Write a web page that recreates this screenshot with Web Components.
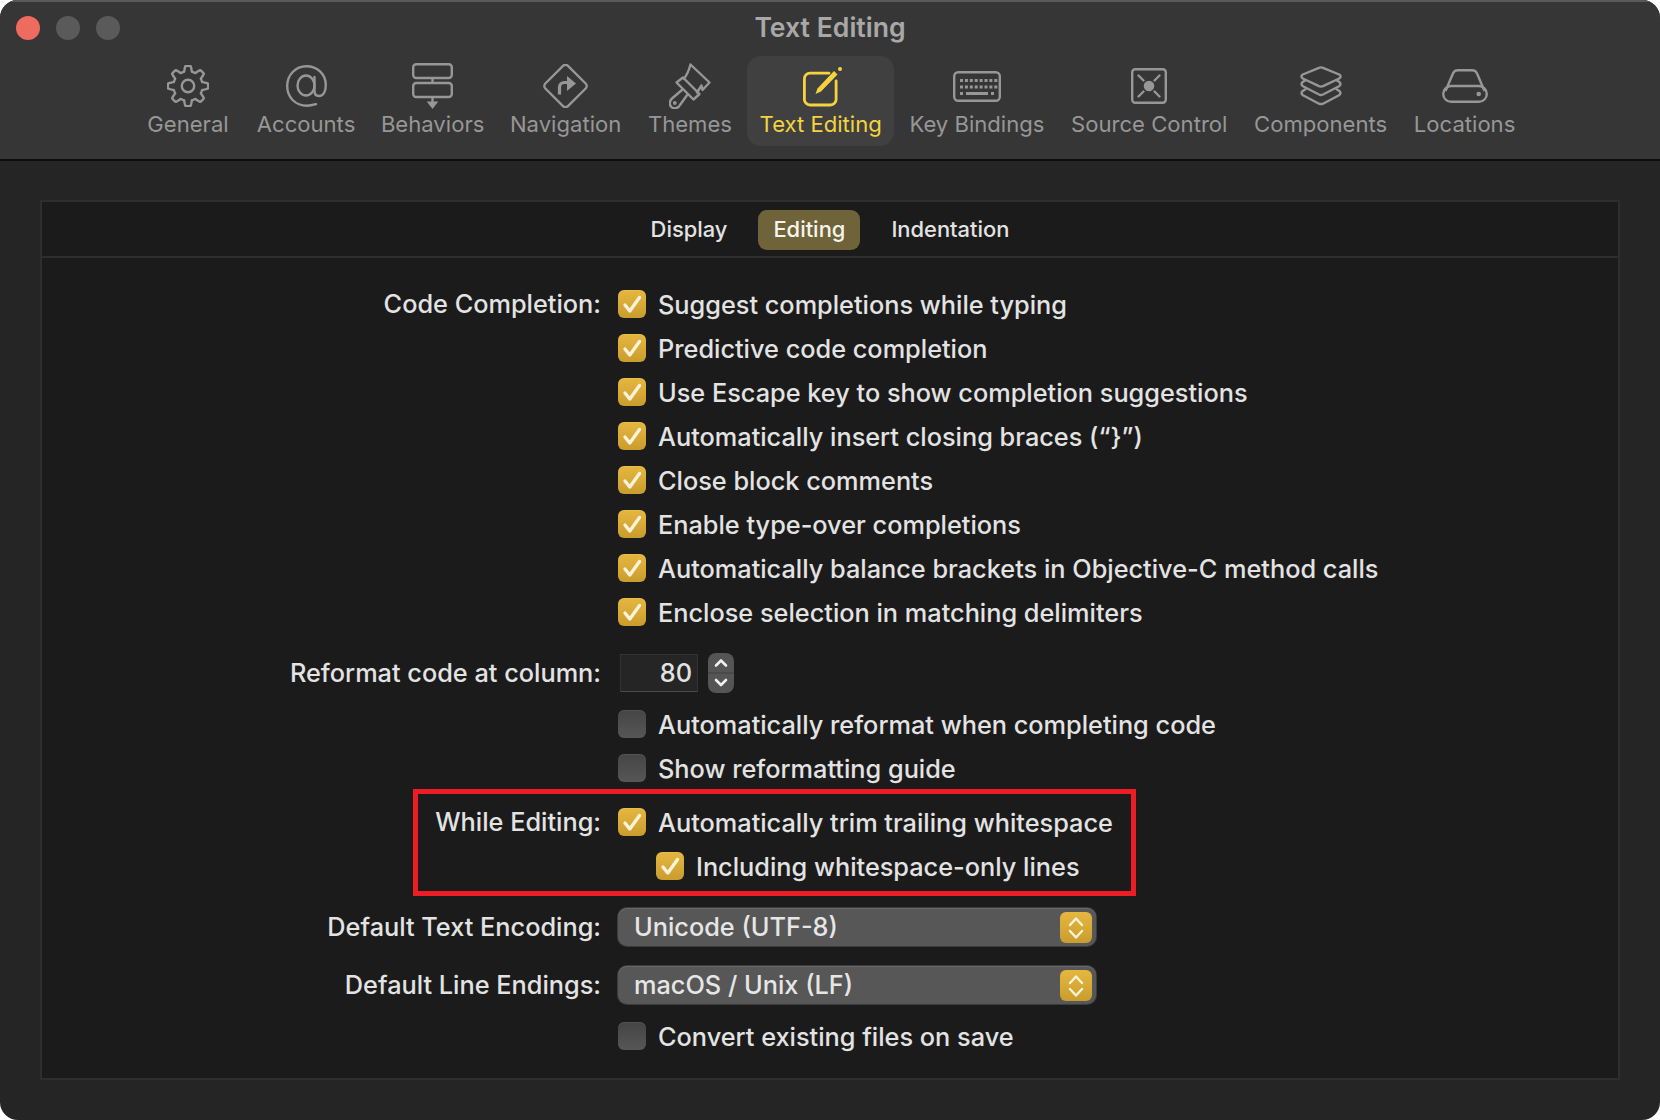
<!DOCTYPE html>
<html>
<head>
<meta charset="utf-8">
<style>
  html, body { margin: 0; background: #fff; }
  body { width: 1660px; height: 1120px; overflow: hidden; font-family: "Inter", "Liberation Sans", sans-serif; }
</style>
</head>
<body>
<prefs-window></prefs-window>
<script>
// gear outline: eight soft teeth around the centre
function gearPath() {
  let d = '';
  for (let i = 0; i < 144; i++) {
    const a = i / 144 * Math.PI * 2 + Math.PI / 8;
    const w = Math.max(-1, Math.min(1, Math.cos(a * 8) * 1.9));
    const r = 17.4 + 2.7 * w;
    d += (i ? 'L' : 'M') + (21 + r * Math.cos(a)).toFixed(2) + ' ' + (21 + r * Math.sin(a)).toFixed(2);
  }
  return d + 'z';
}

function keyDots() {
  let s = '';
  for (const y of [8, 14.500]) {
    for (let c = 0; c < 8; c++) s += `<rect x="${7 + c * 4.9}" y="${y}" width="3" height="3"/>`;
  }
  return s + '<rect x="7" y="21" width="3" height="3"/><rect x="13" y="21" width="22" height="3"/><rect x="38" y="21" width="3" height="3"/>';
}

const ICONS = {
  general: `<svg width="42" height="42" viewBox="0 0 42 42" fill="none" stroke="currentColor" stroke-width="2.400" stroke-linejoin="round"><path d="${gearPath()}"/><circle cx="21" cy="21" r="6.200"/></svg>`,
  accounts: `<svg width="41" height="42" viewBox="0 0 41 42" fill="none" stroke="currentColor" stroke-width="2.400" stroke-linecap="round"><path d="M30 39.200C27 40 24 40.700 21 40.700 9 40.700 1.200 32 1.200 21 1.200 10 9.500 1.300 20.500 1.300 31.500 1.300 39.800 9.500 39.800 20 39.800 27 37 31 33 31 29.800 31 28.500 29 28.500 26V12"/><ellipse cx="20" cy="20.500" rx="8.500" ry="10"/></svg>`,
  behaviors: `<svg width="41" height="46" viewBox="0 0 41 46" fill="none" stroke="currentColor" stroke-width="2.400"><rect x="1.200" y="1.200" width="38.600" height="13.800" rx="3"/><rect x="1.200" y="20" width="38.600" height="14" rx="3"/><path d="M20.500 15v5M20.500 34v5"/><path d="M14.700 38.500h11.600L20.500 46z" fill="currentColor" stroke="none"/></svg>`,
  navigation: `<svg width="45" height="44" viewBox="0 0 45 44" fill="none" stroke="currentColor" stroke-width="2.400" stroke-linejoin="round"><rect x="6.500" y="6" width="32" height="32" rx="3.500" transform="rotate(45 22.500 22)"/><path d="M16.500 30.500v-7c0-3 2-5 5-5h5" stroke-width="3.200"/><path d="M24 12l9 7.500-9 7.500z" fill="currentColor" stroke="none"/></svg>`,
  themes: `<svg width="42" height="46" viewBox="0 0 42 46" fill="none" stroke="currentColor" stroke-width="2.400" stroke-linejoin="round" stroke-linecap="round"><path d="M15 15.500C18 12 20 7 21.500 1.500L40.500 19.500 33.500 27 32.500 22.500 28 29.500"/><path d="M7.500 19.500L14 14.500 30.500 31 24.500 36.500z"/><path d="M13.500 26.500L3 35.500C-.300 38.500 .500 43 3 44.500 6 46 9.500 45 11 42L18.500 31.500"/><circle cx="5.800" cy="40" r="1.900" fill="currentColor" stroke="none"/></svg>`,
  text: `<svg style="margin-left:4px" width="40" height="42" viewBox="0 0 40 42" fill="none" stroke="currentColor"><path d="M26 8.200H7A5.600 5.600 0 0 0 1.400 13.800V34.400A5.600 5.600 0 0 0 7 40H27.500A5.600 5.600 0 0 0 33.100 34.400V16" stroke-width="2.800" stroke-linecap="round"/><path d="M12.500 29L14.500 23.500 31 6 34.500 9.500 18 26.500z" fill="currentColor" stroke="none"/><circle cx="37" cy="4" r="2" fill="currentColor" stroke="none"/></svg>`,
  keys: `<svg width="48" height="31" viewBox="0 0 48 31" fill="none" stroke="currentColor" stroke-width="2.400"><rect x="1.200" y="1.200" width="45.600" height="28.600" rx="4"/><g fill="currentColor" stroke="none">${keyDots()}</g></svg>`,
  source: `<svg width="36" height="36" viewBox="0 0 36 36" fill="none" stroke="currentColor" stroke-width="2.400" stroke-linecap="round"><rect x="1.200" y="1.200" width="33.600" height="33.600" rx="3"/><circle cx="18" cy="18" r="5.300" fill="currentColor" stroke="none"/><path d="M7.500 7.500l5 5M28.500 7.500l-5 5M7.500 28.500l5-5M28.500 28.500l-5-5"/></svg>`,
  components: `<svg width="42" height="40" viewBox="0 0 42 40" fill="none" stroke="currentColor" stroke-width="2.400" stroke-linejoin="round" stroke-linecap="round"><path d="M19 1.800Q21 1 23 1.800L39.200 8.500Q42 10.300 39.200 12.500L23 20.200Q21 21 19 20.200L2.800 12.500Q0 10.300 2.800 8.500z"/><path d="M5.500 14.200L3 15.800Q0 18 3 20.200L19 28.500Q21 29.400 23 28.500L39 20.200Q42 18 39 15.800L36.500 14.200"/><path d="M5.500 23.200L3 24.800Q0 27 3 29.200L19 37.700Q21 38.600 23 37.700L39 29.200Q42 27 39 24.800L36.500 23.200"/></svg>`,
  locations: `<svg width="46" height="34" viewBox="0 0 46 34" fill="none" stroke="currentColor" stroke-width="2.400"><path d="M3.500 22L10.500 5.500C11.500 2.500 13.500 1.200 16 1.200H30C32.500 1.200 34.500 2.500 35.500 5.500L42.500 22"/><rect x="1.200" y="17" width="43.600" height="15.800" rx="7.900"/><circle cx="36.700" cy="25" r="2.300" fill="currentColor" stroke="none"/></svg>`
};

class PrefTool extends HTMLElement {
  constructor() {
    super();
    this.attachShadow({ mode: 'open' });
    const on = this.hasAttribute('active');
    this.shadowRoot.innerHTML = `
      <style>
        :host { display: block; height: 90px; margin-top: 54px; }
        .t { height: 90px; box-sizing: border-box; padding: 5px ${on ? '12.500px' : '13.300px'} 0; margin: 0 ${on ? '0.800px' : '0'}; border-radius: 14px; display: flex; flex-direction: column; align-items: center; color: ${on ? '#f5d33f' : '#979797'}; background: ${on ? '#404040' : 'transparent'}; }
        .i { height: 50px; display: flex; align-items: center; justify-content: center; }
        .l { font-size: 22.100px; line-height: 26px; white-space: nowrap; }
      </style>
      <div class="t"><div class="i">${ICONS[this.getAttribute('icon')]}</div><div class="l"><slot></slot></div></div>`;
  }
}
customElements.define('pref-tool', PrefTool);

class PrefCheck extends HTMLElement {
  constructor() {
    super();
    this.attachShadow({ mode: 'open' });
    const on = this.hasAttribute('checked');
    this.shadowRoot.innerHTML = `
      <style>
        :host { display: flex; align-items: center; gap: 12px; height: 44px; color: #e3e3e3; font-size: 25.300px; font-weight: 450; white-space: nowrap; }
        .b { width: 28px; height: 28px; border-radius: 6px; flex: none; background: ${on ? 'linear-gradient(#e6b73f,#c99c2f)' : 'linear-gradient(#454545,#565656)'}; box-shadow: inset 0 1px 0 rgba(255,255,255,.08); display: block; }
        svg { display: block; }
      </style>
      <span class="b">${on ? '<svg width="28" height="28" viewBox="0 0 28 28" fill="none" stroke="#fbf3d9" stroke-width="3.400" stroke-linecap="round" stroke-linejoin="round"><path d="M7 15l4.800 6L21.500 7.500"/></svg>' : ''}</span><span><slot></slot></span>`;
  }
}
customElements.define('pref-check', PrefCheck);

class PrefPopup extends HTMLElement {
  constructor() {
    super();
    this.attachShadow({ mode: 'open' });
    this.shadowRoot.innerHTML = `
      <style>
        :host { display: flex; align-items: center; width: 478px; height: 38px; margin: 3px 0; box-sizing: border-box; border-radius: 9px; background: #575757; box-shadow: 0 0 0 1px #3c3c3c, inset 0 1px 0 #686868; color: #e6e6e6; font-size: 25.300px; font-weight: 450; padding: 0 4px 0 16px; }
        .s { flex: 1; position: relative; top: -1px; }
        .a { width: 32px; height: 31px; border-radius: 6px; background: linear-gradient(#e6b73f,#c99c2f); display: block; }
        svg { display: block; }
      </style>
      <span class="s"><slot></slot></span>
      <span class="a"><svg width="32" height="31" viewBox="0 0 32 31" fill="none" stroke="#fbf3d9" stroke-width="2.400" stroke-linecap="round" stroke-linejoin="round"><path d="M10 13l6-6.500 6 6.500M10 19l6 6.500 6-6.500"/></svg></span>`;
  }
}
customElements.define('pref-popup', PrefPopup);

class PrefRow extends HTMLElement {
  constructor() {
    super();
    this.attachShadow({ mode: 'open' });
    this.shadowRoot.innerHTML = `
      <style>
        :host { display: grid; grid-template-columns: 559px 1fr; column-gap: 17px; align-items: start; color: #e3e3e3; font-size: 25.300px; font-weight: 450; }
        .k { text-align: right; line-height: 44px; white-space: nowrap; }
        .v { display: flex; flex-direction: column; align-items: flex-start; }
      </style>
      <div class="k">${this.getAttribute('label') || ''}</div>
      <div class="v"><slot></slot></div>`;
  }
}
customElements.define('pref-row', PrefRow);

class PrefStepper extends HTMLElement {
  constructor() {
    super();
    this.attachShadow({ mode: 'open' });
    this.shadowRoot.innerHTML = `
      <style>
        :host { display: flex; align-items: center; gap: 10px; height: 44px; margin-left: 2px; color: #e3e3e3; font-size: 25.300px; font-weight: 450; }
        .f { width: 78px; height: 38px; box-sizing: border-box; background: #252525; border: 1px solid #333; border-bottom-color: #4a4a4a; text-align: right; line-height: 36px; padding-right: 5px; }
        .s { width: 26px; height: 40px; border-radius: 8px; background: #555; display: flex; align-items: center; justify-content: center; }
      </style>
      <div class="f"><slot></slot></div>
      <div class="s"><svg width="26" height="40" viewBox="0 0 26 40" fill="none" stroke="#f0f0f0" stroke-width="2.600" stroke-linecap="round" stroke-linejoin="round"><path d="M8 12.500l5-5 5 5M8 27l5 5 5-5"/><path d="M0 20h26" stroke="#474747" stroke-width="1.500"/></svg></div>`;
  }
}
customElements.define('pref-stepper', PrefStepper);

class PrefWindow extends HTMLElement {
  constructor() {
    super();
    this.attachShadow({ mode: 'open' });
    this.shadowRoot.innerHTML = `
      <style>
        :host { display: block; width: 1660px; height: 1120px; background: #fff; }
        * { box-sizing: border-box; }
        .w { position: relative; width: 1660px; height: 1120px; border-radius: 18px; overflow: hidden; background: #252525; }
        .bar { height: 161px; background: #363636; border-top: 2px solid #5a5a5a; border-bottom: 2px solid #0d0d0d; position: relative; }
        .dots { position: absolute; left: 16px; top: 14px; display: flex; gap: 16px; }
        .dots i { width: 24px; height: 24px; border-radius: 50%; background: #5a5a5a; display: block; }
        .dots i:first-child { background: #ef6a5f; }
        .title { position: absolute; left: 0; right: 0; top: 10px; text-align: center; font-size: 26.600px; line-height: 30px; font-weight: 600; color: #a8a8a8; }
        .tools { display: flex; justify-content: flex-start; padding-left: 134px; }
        .panel { margin: 39px 40px 0 40px; height: 880px; border: 2px solid #2e2e2e; background: #1b1b1b; }
        .tabs { height: 56px; border-bottom: 2px solid #2e2e2e; display: flex; justify-content: center; align-items: center; gap: 16px; font-size: 21.900px; font-weight: 450; color: #e3e3e3; padding-top: 2px; }
        .tab { height: 40px; line-height: 38px; padding: 0 15px; border-radius: 9px; }
        .tab.on { background: #6f6339; color: #f6f4ec; }
        .body { padding-top: 24px; display: flex; flex-direction: column; }
        .hl { position: absolute; left: 413px; top: 789px; width: 723px; height: 107px; border: 5px solid #ee1c25; pointer-events: none; }
      </style>
      <div class="w">
        <div class="bar">
          <div class="dots"><i></i><i></i><i></i></div>
          <div class="title">Text Editing</div>
          <div class="tools">
            <pref-tool icon="general" style="margin-right:1.500px">General</pref-tool>
            <pref-tool icon="accounts" style="margin-right:-1px">Accounts</pref-tool>
            <pref-tool icon="behaviors" style="margin-right:-1px">Behaviors</pref-tool>
            <pref-tool icon="navigation">Navigation</pref-tool>
            <pref-tool icon="themes" style="margin-right:1px">Themes</pref-tool>
            <pref-tool icon="text" active style="margin-right:1px">Text Editing</pref-tool>
            <pref-tool icon="keys">Key Bindings</pref-tool>
            <pref-tool icon="source">Source Control</pref-tool>
            <pref-tool icon="components">Components</pref-tool>
            <pref-tool icon="locations">Locations</pref-tool>
          </div>
        </div>
        <div class="panel">
          <div class="tabs"><div class="tab">Display</div><div class="tab on">Editing</div><div class="tab">Indentation</div></div>
          <div class="body">
            <pref-row label="Code Completion:">
              <pref-check checked>Suggest completions while typing</pref-check>
              <pref-check checked>Predictive code completion</pref-check>
              <pref-check checked>Use Escape key to show completion suggestions</pref-check>
              <pref-check checked>Automatically insert closing braces (“}”)</pref-check>
              <pref-check checked>Close block comments</pref-check>
              <pref-check checked>Enable type-over completions</pref-check>
              <pref-check checked>Automatically balance brackets in Objective-C method calls</pref-check>
              <pref-check checked>Enclose selection in matching delimiters</pref-check>
            </pref-row>
            <pref-row label="Reformat code at column:" style="margin-top:17px">
              <pref-stepper>80</pref-stepper>
              <pref-check style="margin-top:7px">Automatically reformat when completing code</pref-check>
              <pref-check>Show reformatting guide</pref-check>
            </pref-row>
            <pref-row label="While Editing:" style="margin-top:10px">
              <pref-check checked>Automatically trim trailing whitespace</pref-check>
              <pref-check checked style="margin-left:38px">Including whitespace-only lines</pref-check>
            </pref-row>
            <pref-row label="Default Text Encoding:" style="margin-top:17px">
              <pref-popup>Unicode (UTF-8)</pref-popup>
            </pref-row>
            <pref-row label="Default Line Endings:" style="margin-top:14px">
              <pref-popup>macOS / Unix (LF)</pref-popup>
            </pref-row>
            <pref-row style="margin-top:7px">
              <pref-check>Convert existing files on save</pref-check>
            </pref-row>
          </div>
        </div>
        <div class="hl"></div>
      </div>`;
  }
}
customElements.define('prefs-window', PrefWindow);
</script>
</body>
</html>
